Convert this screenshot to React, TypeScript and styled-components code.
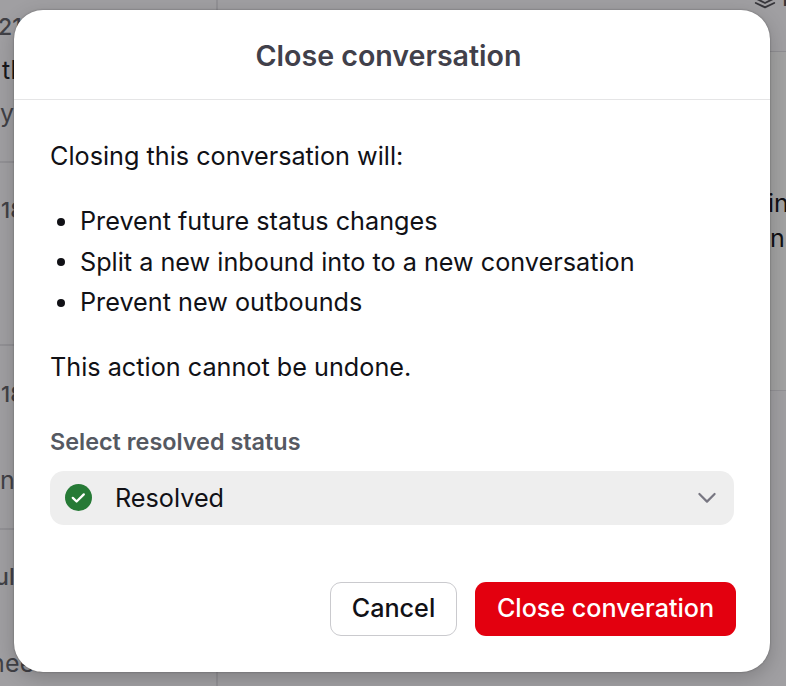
import React from 'react';
import styled, { createGlobalStyle } from 'styled-components';

const GlobalStyle = createGlobalStyle`
  *, *::before, *::after { box-sizing: border-box; }
  body {
    margin: 0;
    overflow: hidden;
    font-family: Inter, 'Liberation Sans', sans-serif;
    -webkit-font-smoothing: antialiased;
  }
`;

const Page = styled.div`
  position: relative;
  display: grid;
  grid-template-columns: 218px 1fr;
  width: 786px;
  height: 686px;
  overflow: hidden;
  background: #a09fa2;
`;

const Sidebar = styled.aside`
  display: flex;
  flex-direction: column;
  margin-top: -21px;
  border-right: 2px solid #929195;
`;

const Thread = styled.div`
  flex: none;
  height: 183.5px;
  padding-top: 26.5px;
  border-bottom: 2px solid #929195;
`;

const ThreadLine = styled.div<{ $shift?: number; $tone?: string; $weight?: number; $size?: number }>`
  height: 43px;
  line-height: 43px;
  margin-left: ${(p) => p.$shift ?? 0}px;
  color: ${(p) => p.$tone ?? '#414146'};
  font-size: ${(p) => p.$size ?? 25}px;
  font-weight: ${(p) => p.$weight ?? 400};
  letter-spacing: 0.2px;
  white-space: nowrap;
`;

const Main = styled.main`
  display: flex;
  flex-direction: column;
`;

const Toolbar = styled.header`
  display: flex;
  justify-content: flex-end;
  gap: 5px;
  height: 52px;
  border-bottom: 1px solid #8f8e92;
  color: #37363b;
  font-size: 25px;
  font-weight: 500;
  line-height: 30px;
`;

const LayersIcon = styled.svg`
  flex: none;
  width: 24px;
  height: 24px;
  margin-top: -14px;
`;

const ToolbarLabel = styled.span`
  width: 4px;
  margin-top: -18px;
`;

const Message = styled.section`
  display: flex;
  flex-direction: column;
  align-items: flex-end;
  height: 339px;
  padding-top: 134px;
  border-bottom: 1px solid #929195;
  background: #a2a2a2;
`;

const MessageLine = styled.div<{ $width: number }>`
  width: ${(p) => p.$width}px;
  height: 35.3px;
  color: #101014;
  font-size: 25px;
  line-height: 35px;
  white-space: nowrap;
`;

const Dialog = styled.div`
  position: absolute;
  top: 10px;
  left: 14px;
  display: flex;
  flex-direction: column;
  width: 756px;
  height: 662px;
  border-radius: 29px;
  background: #fff;
  box-shadow: 0 0 2px rgba(0, 0, 0, 0.35), 0 6px 20px rgba(0, 0, 0, 0.2);
  color: #111116;
`;

const DialogHeader = styled.header`
  height: 90px;
  border-bottom: 1px solid #e5e5e6;
`;

const Title = styled.h1`
  margin: 0;
  padding: 1px 7px 0 0;
  color: #41404a;
  font-size: 28.6px;
  font-weight: 600;
  line-height: 90px;
  text-align: center;
`;

const Body = styled.div`
  padding: 36px 36px 0;
  font-size: 25.22px;
  line-height: 40.5px;
`;

const Paragraph = styled.p`
  margin: 0;
`;

const EffectList = styled.ul`
  margin: 24.5px 0;
  padding: 0;
  list-style: none;
`;

const Effect = styled.li`
  display: flex;
  align-items: center;

  &::before {
    content: '';
    width: 8px;
    height: 8px;
    margin: 1px 15px 0 7px;
    border-radius: 50%;
    background: #111116;
  }
`;

const FieldLabel = styled.div`
  margin-top: 38px;
  color: #555962;
  font-size: 23.4px;
  font-weight: 600;
  line-height: 32px;
`;

const Select = styled.button`
  display: flex;
  align-items: center;
  width: 684px;
  height: 54px;
  margin-top: 13px;
  padding: 0 17px 0 15px;
  border: 0;
  border-radius: 14px;
  background: #eee;
  color: #111116;
  font: inherit;
  text-align: left;
`;

const SelectValue = styled.span`
  flex: 1;
  margin-left: 23px;
  padding-top: 2px;
`;

const StatusIcon = styled.svg`
  width: 27px;
  height: 27px;
  margin-top: -1px;
`;

const Chevron = styled.svg`
  width: 20px;
  height: 12px;
`;

const Actions = styled.footer`
  display: flex;
  justify-content: flex-end;
  gap: 18px;
  margin-top: auto;
  padding: 0 34px 36px;
`;

const Button = styled.button<{ $primary?: boolean }>`
  width: ${(p) => (p.$primary ? 261 : 127)}px;
  height: 54px;
  padding: 0 0 2px;
  border: ${(p) => (p.$primary ? '0' : '1px solid #cacace')};
  border-radius: 11px;
  background: ${(p) => (p.$primary ? '#e3000f' : '#fff')};
  color: ${(p) => (p.$primary ? '#fff' : '#111116')};
  font: 500 25.15px Inter, 'Liberation Sans', sans-serif;
  white-space: nowrap;
`;

const effects = [
  'Prevent future status changes',
  'Split a new inbound into to a new conversation',
  'Prevent new outbounds',
];

export default function App() {
  return (
    <>
      <GlobalStyle />
      <Page>
        <Sidebar>
          <Thread>
            <ThreadLine $shift={-2} $size={23} $weight={500}>21</ThreadLine>
            <ThreadLine $shift={2} $tone="#17171b">th</ThreadLine>
            <ThreadLine>y</ThreadLine>
          </Thread>
          <Thread>
            <ThreadLine $shift={1} $size={22} $weight={500}>18</ThreadLine>
          </Thread>
          <Thread>
            <ThreadLine $shift={1} $size={22} $weight={500}>18</ThreadLine>
            <ThreadLine />
            <ThreadLine>n</ThreadLine>
          </Thread>
          <Thread>
            <ThreadLine $shift={-5} $size={23} $weight={500}>ul</ThreadLine>
            <ThreadLine />
            <ThreadLine $shift={-10}>need a recall</ThreadLine>
          </Thread>
        </Sidebar>
        <Main>
          <Toolbar>
            <LayersIcon viewBox="0 0 24 24" fill="none" stroke="currentColor" strokeWidth="1.9" strokeLinecap="round" strokeLinejoin="round">
              <path d="M12 3 2.8 7.5 12 12l9.2-4.5zM2.8 12.4 12 17l9.2-4.6M2.8 17 12 21.3 21.2 17" />
            </LayersIcon>
            <ToolbarLabel>I</ToolbarLabel>
          </Toolbar>
          <Message>
            <MessageLine $width={18}>in</MessageLine>
            <MessageLine $width={16}>n</MessageLine>
          </Message>
        </Main>
        <Dialog role="dialog" aria-modal="true" aria-labelledby="dialog-title">
          <DialogHeader>
            <Title id="dialog-title">Close conversation</Title>
          </DialogHeader>
          <Body>
            <Paragraph>Closing this conversation will:</Paragraph>
            <EffectList>
              {effects.map((effect) => (
                <Effect key={effect}>{effect}</Effect>
              ))}
            </EffectList>
            <Paragraph>This action cannot be undone.</Paragraph>
            <FieldLabel>Select resolved status</FieldLabel>
            <Select>
              <StatusIcon viewBox="0 0 27 27">
                <circle cx="13.5" cy="13.5" r="13.5" fill="#267a36" />
                <path d="m7.8 13.9 3.8 3.6 7.2-7.1" fill="none" stroke="#fff" strokeWidth="2.3" strokeLinecap="round" strokeLinejoin="round" />
              </StatusIcon>
              <SelectValue>Resolved</SelectValue>
              <Chevron viewBox="0 0 20 12">
                <path d="m2.4 2 7.6 7.6L17.6 2" fill="none" stroke="#777681" strokeWidth="2.2" strokeLinecap="round" strokeLinejoin="round" />
              </Chevron>
            </Select>
          </Body>
          <Actions>
            <Button>Cancel</Button>
            <Button $primary>Close converation</Button>
          </Actions>
        </Dialog>
      </Page>
    </>
  );
}
